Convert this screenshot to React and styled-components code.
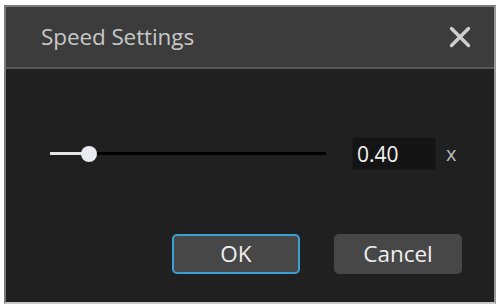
import React from 'react';
import styled, { createGlobalStyle } from 'styled-components';

const GlobalStyle = createGlobalStyle`
  html, body {
    margin: 0;
    padding: 0;
    background: #ffffff;
  }
  body {
    font-family: "Open Sans", "Noto Sans", sans-serif;
  }
`;

const Window = styled.div`
  margin: 5px 0 0 4px;
  width: 492px;
  height: 299px;
  box-sizing: border-box;
  border: 2px solid #7c7c7c;
  border-right-color: #9a9a9a;
  border-bottom-color: #c8c8c8;
  background: #202020;
  display: flex;
  flex-direction: column;
`;

const Header = styled.div`
  height: 62px;
  box-sizing: border-box;
  background: #3c3c3c;
  border-bottom: 2px solid #575757;
  display: flex;
  align-items: center;
  justify-content: space-between;
  padding: 0 22px 0 35px;
`;

const Title = styled.h1`
  margin: 0 0 2px;
  font-size: 22.5px;
  font-weight: 400;
  color: #c9c9c9;
  letter-spacing: -0.1px;
`;

const CloseButton = styled.button`
  width: 24px;
  height: 24px;
  padding: 0;
  border: none;
  background: transparent;
  display: flex;
  align-items: center;
  justify-content: center;
  cursor: pointer;
`;

const Body = styled.div`
  flex: 1;
  display: flex;
  flex-direction: column;
  padding: 68px 32px 0 44px;
  gap: 64px;
`;

const SliderRow = styled.div`
  display: flex;
  align-items: center;
  height: 33px;
`;

const Track = styled.div`
  position: relative;
  width: 276px;
  height: 3px;
  background: #000000;
`;

const Fill = styled.div`
  height: 100%;
  background: #e6e6e6;
`;

const Thumb = styled.div`
  position: absolute;
  top: 50%;
  width: 16px;
  height: 16px;
  border-radius: 50%;
  background: #e8ebf2;
  transform: translate(-50%, -50%);
`;

const ValueBox = styled.input`
  margin-left: 26px;
  width: 84px;
  height: 33px;
  box-sizing: border-box;
  border: 1px solid #1a1a1a;
  background: #141414;
  color: #f4f4f4;
  font-family: inherit;
  font-size: 21px;
  padding: 0 4px;
  outline: none;
`;

const Unit = styled.span`
  margin-left: 10px;
  font-size: 20px;
  color: #bdbdbd;
`;

const ButtonRow = styled.div`
  display: flex;
  justify-content: flex-end;
  gap: 34px;
`;

const DialogButton = styled.button`
  width: 128px;
  height: 40px;
  box-sizing: border-box;
  border-radius: 5px;
  border: 2px solid ${(p) => (p.$primary ? '#3b9fd6' : '#474747')};
  background: #474747;
  color: #f0f0f0;
  font-family: inherit;
  font-size: 22.5px;
  line-height: 1;
  padding: 0;
  cursor: pointer;
`;

function Slider({ value, min, max }) {
  const pct = ((value - min) / (max - min)) * 100;
  return (
    <Track>
      <Fill style={{ width: `${pct}%` }} />
      <Thumb style={{ left: `${pct}%` }} />
    </Track>
  );
}

export default function App() {
  return (
    <>
      <GlobalStyle />
      <Window>
        <Header>
          <Title>Speed Settings</Title>
          <CloseButton aria-label="Close">
            <svg width="22" height="22" viewBox="0 0 22 22">
              <path
                d="M2.5 2.5 L19.5 19.5 M19.5 2.5 L2.5 19.5"
                stroke="#cfcfcf"
                strokeWidth="3.4"
                strokeLinecap="round"
              />
            </svg>
          </CloseButton>
        </Header>
        <Body>
          <SliderRow>
            <Slider value={0.4} min={0.25} max={1.3} />
            <ValueBox defaultValue="0.40" />
            <Unit>x</Unit>
          </SliderRow>
          <ButtonRow>
            <DialogButton $primary>OK</DialogButton>
            <DialogButton>Cancel</DialogButton>
          </ButtonRow>
        </Body>
      </Window>
    </>
  );
}
